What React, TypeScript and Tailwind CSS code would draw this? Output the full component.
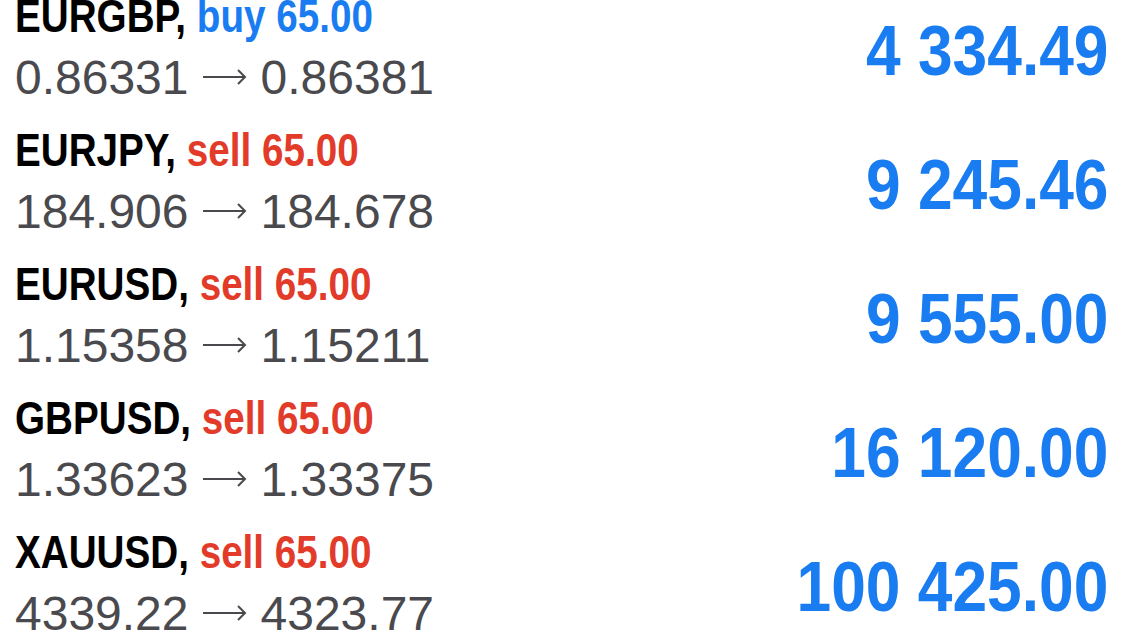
type Trade = {
  symbol: string;
  side: "buy" | "sell";
  volume: string;
  open: string;
  close: string;
  profit: string;
};

const trades: Trade[] = [
  { symbol: "EURGBP", side: "buy", volume: "65.00", open: "0.86331", close: "0.86381", profit: "4 334.49" },
  { symbol: "EURJPY", side: "sell", volume: "65.00", open: "184.906", close: "184.678", profit: "9 245.46" },
  { symbol: "EURUSD", side: "sell", volume: "65.00", open: "1.15358", close: "1.15211", profit: "9 555.00" },
  { symbol: "GBPUSD", side: "sell", volume: "65.00", open: "1.33623", close: "1.33375", profit: "16 120.00" },
  { symbol: "XAUUSD", side: "sell", volume: "65.00", open: "4339.22", close: "4323.77", profit: "100 425.00" },
];

function Arrow() {
  return (
    <svg
      width="44"
      height="16"
      viewBox="0 0 44 16"
      className="mx-[14px] inline-block align-[9px]"
      fill="none"
      stroke="#4a4a4e"
      strokeWidth="2"
    >
      <path d="M0 8h42" />
      <path d="M35 1l7 7-7 7" />
    </svg>
  );
}

function TradeRow({ trade }: { trade: Trade }) {
  return (
    <div className="flex h-[134px] items-center justify-between pl-[15px] pr-[17px]">
      <div className="flex flex-col">
        <div className="whitespace-nowrap font-['Liberation_Sans',sans-serif] text-[46px] font-bold leading-[60px] text-black">
          <span className="inline-block origin-left scale-x-[0.84]">
            {trade.symbol},{" "}
            <span className={trade.side === "buy" ? "text-[#1a7cf1]" : "text-[#e23b2a]"}>
              {trade.side} {trade.volume}
            </span>
          </span>
        </div>
        <div className="whitespace-nowrap font-['Liberation_Sans',sans-serif] text-[48px] leading-[64px] text-[#4a4a4e]">
          {trade.open}
          <Arrow />
          {trade.close}
        </div>
      </div>
      <div className="whitespace-nowrap pt-[5px] font-['Liberation_Sans',sans-serif] text-[70px] font-bold leading-[70px] text-[#1a7cf1]">
        <span className="inline-block origin-right scale-x-[0.89]">{trade.profit}</span>
      </div>
    </div>
  );
}

export default function App() {
  return (
    <div className="h-[633px] w-[1125px] overflow-hidden bg-white">
      <div className="-mt-[19px] flex flex-col">
        {trades.map((t) => (
          <TradeRow key={t.symbol} trade={t} />
        ))}
      </div>
    </div>
  );
}
